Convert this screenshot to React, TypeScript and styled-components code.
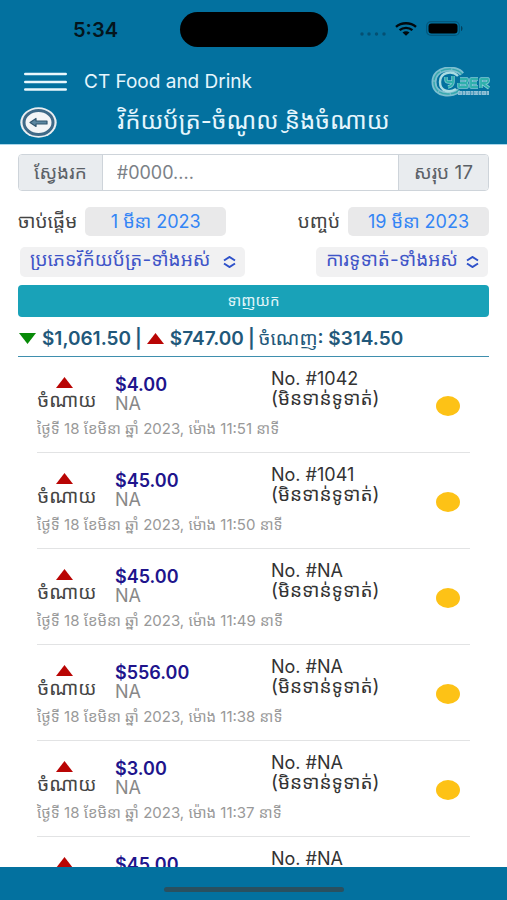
import React from "react";
import styled, { createGlobalStyle } from "styled-components";

const GlobalStyle = createGlobalStyle`
  * { box-sizing: border-box; }
  body {
    margin: 0;
    background: #fff;
    color: #444;
    font-family: Inter, "Noto Sans Khmer", "Noto Sans", sans-serif;
    font-size: 18px;
    line-height: 20px;
  }
  button, input, select { font: inherit; color: inherit; margin: 0; }
`;

const Screen = styled.div`
  display: flex;
  flex-direction: column;
  height: 100vh;
  overflow: hidden;
`;

const Header = styled.header`
  flex: none;
  background: #03719f;
  color: #e6f6fd;
  border-bottom: 1px solid #a9d6ea;
`;

const StatusBar = styled.div`
  display: grid;
  grid-template-columns: 1fr 148px 1fr;
  align-items: center;
  padding: 12px 0 11px;
  color: #04151d;
`;

const Clock = styled.time`
  padding-left: 73px;
  font-size: 20px;
  font-weight: 600;
`;

const Island = styled.div`
  height: 35px;
  border-radius: 18px;
  background: #000;
`;

const StatusIcons = styled.div`
  display: flex;
  align-items: center;
  justify-content: flex-end;
  gap: 9px;
  padding: 0 44px 2px 0;
`;

const TitleBar = styled.div`
  display: flex;
  align-items: center;
  height: 48px;
  padding: 0 16px 0 24px;
`;

const IconButton = styled.button`
  display: flex;
  flex: none;
  padding: 0;
  border: 0;
  background: none;
  cursor: pointer;
`;

const AppName = styled.h1`
  flex: 1;
  margin: 0 0 0 17px;
  font-size: 19px;
  font-weight: 400;
`;

const PageBar = styled.div`
  display: grid;
  grid-template-columns: 38px 1fr 38px;
  align-items: center;
  height: 38px;
  padding: 0 20px 5px;
`;

const PageTitle = styled.h2`
  margin: 0;
  padding-bottom: 4px;
  text-align: center;
  font-size: 24px;
  line-height: 28px;
  font-weight: 400;
  white-space: nowrap;
`;

const Filters = styled.form`
  flex: none;
  padding: 9px 18px 0;
`;

const SearchGroup = styled.div`
  display: flex;
  height: 37px;
  overflow: hidden;
  border: 1px solid #ced4da;
  border-radius: 4px;
`;

const Addon = styled.label`
  display: flex;
  align-items: center;
  padding: 0 15px;
  background: #e9ecef;
  color: #5b6167;
  font-size: 19px;
  white-space: nowrap;
`;

const SearchInput = styled.input`
  flex: 1;
  min-width: 0;
  padding: 0 14px;
  border: solid #ced4da;
  border-width: 0 1px;
  background: #fff;
  &::placeholder { color: #7b8187; opacity: 1; }
`;

const FieldRow = styled.div`
  display: flex;
  align-items: center;
  justify-content: space-between;
  margin-top: 16px;
`;

const SelectRow = styled(FieldRow)`
  margin-top: 11px;
  padding: 0 1px 0 2px;
`;

const Field = styled.label`
  display: flex;
  align-items: center;
  gap: 8px;
  font-size: 19px;
  white-space: nowrap;
`;

const DateButton = styled.button`
  width: 141px;
  height: 29px;
  padding: 0;
  border: 0;
  border-radius: 5px;
  background: #e9e9ea;
  color: #3385f5;
  font-size: 18px;
  white-space: nowrap;
`;

const SelectBox = styled.div<{ $width: number }>`
  display: grid;
  align-items: center;
  width: ${(p) => p.$width}px;
  height: 30px;
  border-radius: 5px;
  background: #f1f1f2;
  color: #3f55c8;
  & > * { grid-area: 1 / 1; }
  & > svg { justify-self: end; margin-right: 9px; pointer-events: none; }
`;

const Select = styled.select`
  width: 100%;
  height: 30px;
  padding: 0 24px 4px 10px;
  border: 0;
  background: none;
  font-size: 19px;
  appearance: none;
`;

const Submit = styled.button`
  display: block;
  width: 100%;
  height: 32px;
  margin-top: 8px;
  padding: 0;
  border: 0;
  border-radius: 4px;
  background: #19a2b8;
  color: #e2f6fa;
  font-size: 15px;
`;

const Summary = styled.div`
  display: flex;
  flex: none;
  align-items: center;
  gap: 4px;
  height: 40px;
  margin: 0 18px;
  padding-top: 4px;
  border-bottom: 1px solid #3f8fae;
  color: #22587a;
  font-size: 19px;
  font-weight: 600;
  white-space: nowrap;
  & > svg { margin: 0 2px 0 1px; }
`;

const Profit = styled.span`
  font-weight: 400;
  & > strong { font-weight: 600; }
`;

const List = styled.ul`
  flex: 1;
  min-height: 0;
  margin: 0;
  padding: 0 37px;
  overflow-y: auto;
  scrollbar-width: none;
  list-style: none;
`;

const Row = styled.li`
  display: grid;
  grid-template-columns: 60px 138px 1fr 44px;
  grid-template-rows: 52px 1fr;
  column-gap: 18px;
  height: 96px;
  padding: 10px 0 0;
  border-bottom: 1px solid #e2e3e4;
`;

const Kind = styled.div`
  display: flex;
  flex-direction: column;
  align-items: center;
  gap: 3px;
  padding-top: 10px;
  font-size: 19px;
  white-space: nowrap;
  & > svg { margin-right: 5px; }
`;

const Money = styled.div`
  padding-top: 8px;
  line-height: 19px;
  color: #888;
  & > strong { display: block; font-weight: 600; color: #20148c; }
`;

const Bill = styled.div`
  padding-top: 2px;
  color: #333;
  white-space: nowrap;
`;

const Payment = styled.div`
  font-size: 19px;
`;

const Status = styled.div`
  display: flex;
  padding-top: 29px;
  justify-content: center;
  &::before {
    content: "";
    width: 24px;
    height: 20px;
    border-radius: 50%;
    background: #fdc216;
  }
`;

const Stamp = styled.time`
  grid-column: 1 / -1;
  font-size: 15px;
  color: #999;
`;

const Footer = styled.footer`
  display: flex;
  flex: none;
  justify-content: center;
  height: 33px;
  padding-top: 20px;
  background: #03719f;
  &::before {
    content: "";
    width: 180px;
    height: 5px;
    border-radius: 3px;
    background: #2a505f;
  }
`;

const Triangle = ({ up = false }: { up?: boolean }) => (
  <svg width="17" height="11" viewBox="0 0 17 11" aria-hidden="true">
    <path d={up ? "M8.500 0 17 11H0z" : "M0 0H17L8.500 11z"} fill={up ? "#b90504" : "#078a07"} />
  </svg>
);

const Chevrons = () => (
  <svg width="13" height="12" viewBox="0 0 13 12" fill="none" stroke="#2d50c9" strokeWidth="2" aria-hidden="true">
    <path d="M1 4.500 6.500 1 12 4.500M1 7.500 6.500 11 12 7.500" />
  </svg>
);

const Signal = () => (
  <svg width="26" height="14" viewBox="0 0 26 14" fill="#045073" aria-hidden="true">
    {[2, 9, 16.500, 24].map((x) => (
      <circle key={x} cx={x} cy="12" r="1.700" />
    ))}
  </svg>
);

const Wifi = () => (
  <svg width="22" height="14" viewBox="0 0 22 14" fill="none" stroke="#02090d" strokeWidth="2.400" aria-hidden="true">
    <path d="M1 4.800C6.500 0 15.500 0 21 4.800M4.600 8.200c3.600-3.100 9.200-3.100 12.800 0" />
    <path d="M7.500 10.600c2-1.700 5-1.700 7 0L11 13.800z" fill="#02090d" stroke="none" />
  </svg>
);

const Battery = () => (
  <svg width="37" height="15" viewBox="0 0 37 15" aria-hidden="true">
    <rect x=".6" y=".6" width="32.800" height="13.800" rx="4.500" fill="none" stroke="#04587d" strokeWidth="1.200" />
    <rect x="2.500" y="2.500" width="29" height="10" rx="3" fill="#000" />
    <path d="M35 5v5c2-.6 2-4.400 0-5z" fill="#04405c" />
  </svg>
);

const Menu = () => (
  <svg width="43" height="20" viewBox="0 0 43 20" stroke="#eaf8fd" strokeWidth="2.600" strokeLinecap="round" aria-hidden="true">
    <path d="M1.300 2H41.700M1.300 10H41.700M1.300 17.500H41.700" />
  </svg>
);

const Back = () => (
  <svg width="37" height="31" viewBox="0 0 37 31" aria-hidden="true">
    <ellipse cx="18.500" cy="15.500" rx="18.200" ry="15.200" fill="#e9eef2" />
    <ellipse cx="18.500" cy="15.500" rx="14.500" ry="12" fill="#f4f5f7" stroke="#3f6987" strokeWidth="3" />
    <path d="M10 15.500 16 11.500V14H27V17H16V19.500z" fill="#5d87a1" stroke="#31566f" strokeWidth="1.200" strokeLinejoin="round" />
  </svg>
);

const letterStrokes =
  "M15 10v3q0 2 3 2h3M22 9v6q0 4-5 5M29 12h7q1 4-3 4h-4M33 16q4 0 3 4H28V16M47 12H40v8h7M40 16h6M50 21v-9h7q1 4-3 4h-3l7 5";

const Logo = () => (
  <svg width="60" height="30" viewBox="0 0 60 30" role="img" aria-label="Cyber">
    <g fill="none">
      <path d="M31 7C25-1 3 0 3 15s20 14 25 8" stroke="#7dbfd0" strokeWidth="5" />
      <path d="M31 7C25-1 3 0 3 15s20 14 25 8" stroke="#37a9ae" strokeWidth="1.500" strokeDasharray="11 1" />
      <path d="M27 9C21 3 9 5 9 15s10 11 16 7" stroke="#a9dce2" strokeWidth="2.400" />
      <g strokeLinejoin="round">
        <path d={letterStrokes} stroke="#86cdd6" strokeWidth="3.400" />
        <path d={letterStrokes} stroke="#2fb0ac" strokeWidth="1.800" />
      </g>
      <path d="M27 26H58" stroke="#8fc0d6" strokeWidth="4" strokeDasharray="4 .5 3 .5" />
      <path d="M28 26H57" stroke="#5a9cba" strokeWidth="1" strokeDasharray="1.500 1.500" />
    </g>
  </svg>
);

const entries = [
  { amount: "$4.00", bill: "#1042", time: "11:51" },
  { amount: "$45.00", bill: "#1041", time: "11:50" },
  { amount: "$45.00", bill: "#NA", time: "11:49" },
  { amount: "$556.00", bill: "#NA", time: "11:38" },
  { amount: "$3.00", bill: "#NA", time: "11:37" },
  { amount: "$45.00", bill: "#NA", time: "11:36" },
];

export default function App() {
  return (
    <Screen>
      <GlobalStyle />
      <Header>
        <StatusBar>
          <Clock>5:34</Clock>
          <Island />
          <StatusIcons>
            <Signal />
            <Wifi />
            <Battery />
          </StatusIcons>
        </StatusBar>
        <TitleBar>
          <IconButton type="button" aria-label="ម៉ឺនុយ">
            <Menu />
          </IconButton>
          <AppName>CT Food and Drink</AppName>
          <Logo />
        </TitleBar>
        <PageBar>
          <IconButton type="button" aria-label="ត្រឡប់">
            <Back />
          </IconButton>
          <PageTitle>វិក័យប័ត្រ-ចំណូល{"\u00a0\u032e"}និងចំណាយ</PageTitle>
        </PageBar>
      </Header>

      <Filters onSubmit={(e) => e.preventDefault()}>
        <SearchGroup>
          <Addon htmlFor="search">ស្វែងរក</Addon>
          <SearchInput id="search" type="text" placeholder="#0000...." />
          <Addon as="span">សរុប 17</Addon>
        </SearchGroup>
        <FieldRow>
          <Field>
            ចាប់ផ្តើម
            <DateButton type="button">1 មីនា 2023</DateButton>
          </Field>
          <Field>
            បញ្ចប់
            <DateButton type="button">19 មីនា 2023</DateButton>
          </Field>
        </FieldRow>
        <SelectRow>
          <SelectBox $width={225}>
            <Select aria-label="ប្រភេទវិក័យប័ត្រ">
              <option>ប្រភេទវិក័យប័ត្រ-ទាំងអស់</option>
            </Select>
            <Chevrons />
          </SelectBox>
          <SelectBox $width={172}>
            <Select aria-label="ការទូទាត់">
              <option>ការទូទាត់-ទាំងអស់</option>
            </Select>
            <Chevrons />
          </SelectBox>
        </SelectRow>
        <Submit type="submit">ទាញយក</Submit>
      </Filters>

      <Summary>
        <Triangle />
        <span>$1,061.50</span>
        <span>|</span>
        <Triangle up />
        <span>$747.00</span>
        <span>|</span>
        <Profit>
          ចំណេញ<strong>: $314.50</strong>
        </Profit>
      </Summary>

      <List>
        {entries.map((e) => (
          <Row key={e.time}>
            <Kind>
              <Triangle up />
              ចំណាយ
            </Kind>
            <Money>
              <strong>{e.amount}</strong>
              NA
            </Money>
            <Bill>
              No. {e.bill}
              <Payment>(មិនទាន់ទូទាត់)</Payment>
            </Bill>
            <Status />
            <Stamp>ថ្ងៃទី 18 ខែមិនា ឆ្នាំ 2023, ម៉ោង {e.time} នាទី</Stamp>
          </Row>
        ))}
      </List>
      <Footer />
    </Screen>
  );
}
